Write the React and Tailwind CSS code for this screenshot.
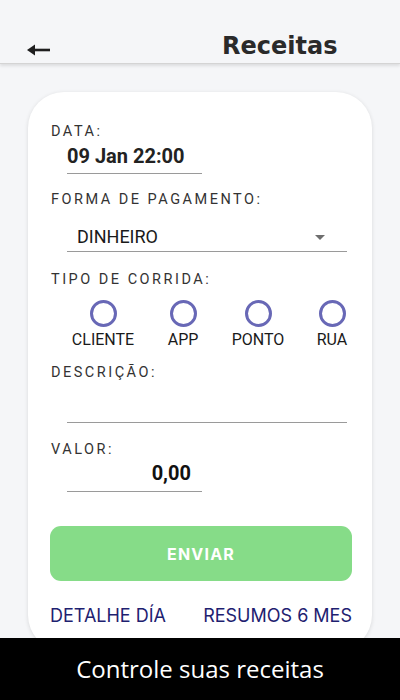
const Label = ({ children, className = "" }) => (
  <div className={`text-[14.5px] leading-[17px] tracking-[2.5px] text-[#333333] ${className}`}>{children}</div>
);

const tipos = [
  { label: "CLIENTE", w: "w-[70px]" },
  { label: "APP", w: "w-[90px]" },
  { label: "PONTO", w: "w-[60px]" },
  { label: "RUA", w: "w-[88px]" },
];

export default function App() {
  return (
    <div className="w-[400px] h-[700px] bg-[#f5f6f8] flex flex-col overflow-hidden font-['Roboto',sans-serif]">
      <header className="h-[64px] shrink-0 flex items-start bg-[#f5f6f8] border-b border-[#d4d4d4] shadow-[0_2px_3px_rgba(0,0,0,0.10)] relative z-10">
        <svg width="23" height="12" viewBox="0 0 23 12" className="ml-[27px] mt-[44px] shrink-0">
          <path d="M0 6 L8 0.5 L8 11.5 Z" fill="#1e1e1e" />
          <rect x="6" y="4.7" width="17" height="2.6" fill="#1e1e1e" />
        </svg>
        <h1 className="ml-[172px] mt-[31px] text-[24px] leading-[30px] font-bold text-[#2a2a2a] font-['DejaVu_Sans',sans-serif]">
          Receitas
        </h1>
      </header>

      <main className="flex-1 min-h-0 overflow-hidden px-[28px] pt-[28px]">
        <div className="bg-white rounded-[36px] shadow-[0_1px_4px_rgba(0,0,0,0.12)] pl-[23px] pr-[22px] pt-[31px] h-[559px]">
          <Label>DATA:</Label>
          <div className="ml-[16px] mt-[4px] w-[135px] border-b-[1.5px] border-[#9a9a9a] pb-[5px] text-[20px] leading-[24px] font-bold text-[#222]">
            09 Jan 22:00
          </div>

          <Label className="mt-[17px]">FORMA DE PAGAMENTO:</Label>
          <div className="ml-[16px] mt-[18px] w-[280px] border-b-[1.5px] border-[#9a9a9a] pb-[3px] pl-[10px] pr-[22px] flex items-center justify-between">
            <span className="text-[18px] leading-[22px] text-[#1a1a1a]">DINHEIRO</span>
            <svg width="10" height="5" viewBox="0 0 10 5">
              <path d="M0 0 H10 L5 5 Z" fill="#6e6e6e" />
            </svg>
          </div>

          <Label className="mt-[19px]">TIPO DE CORRIDA:</Label>
          <div className="flex ml-[17px] mt-[12px]">
            {tipos.map((t) => (
              <div key={t.label} className={`${t.w} shrink-0 flex flex-col items-center`}>
                <div className="w-[27px] h-[27px] rounded-full border-[3px] border-[#6868b6]" />
                <span className="mt-[3px] text-[16px] leading-[19px] text-[#1a1a1a]">{t.label}</span>
              </div>
            ))}
          </div>

          <Label className="mt-[15px]">DESCRIÇÃO:</Label>
          <div className="ml-[16px] mt-[41px] w-[280px] border-b-[1.5px] border-[#9a9a9a]" />

          <Label className="mt-[18px]">VALOR:</Label>
          <div className="ml-[16px] mt-[3px] w-[135px] border-b-[1.5px] border-[#9a9a9a] pb-[6px] pr-[11px] text-right text-[20px] leading-[24px] font-bold text-[#111]">
            0,00
          </div>

          <button className="mt-[34px] -ml-[1px] w-[302px] h-[55px] rounded-[11px] bg-[#86dc88] text-white text-[16px] font-bold tracking-[1.2px] font-['Inter',sans-serif]">
            ENVIAR
          </button>

          <div className="mt-[24px] -ml-[1px] flex justify-between w-[302px] font-['Inter',sans-serif] text-[18px] leading-[22px] text-[#1e2170]">
            <span>DETALHE DÍA</span>
            <span>RESUMOS 6 MES</span>
          </div>
        </div>
      </main>

      <footer className="h-[62px] shrink-0 bg-black flex items-center justify-center">
        <span className="text-white text-[24px] font-['Open_Sans',sans-serif]">Controle suas receitas</span>
      </footer>
    </div>
  );
}
